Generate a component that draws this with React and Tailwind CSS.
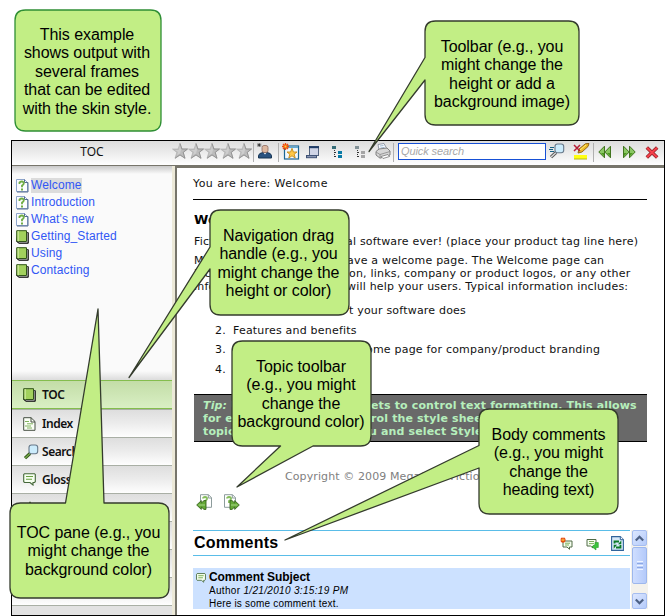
import React from "react";

const VERDANA = "font-['DejaVu_Sans',Verdana,sans-serif]";
const ARIAL = "font-['Liberation_Sans',Arial,sans-serif]";

function Star() {
  return (
    <svg width="16" height="16" viewBox="0 0 16 16" className="block shrink-0">
      <path d="M8 .5 9.9 6H15.5L11.2 9.4 13 15.3 8 11.9 3 15.3 4.8 9.4.5 6H6.1Z" fill="#bcbcbc" stroke="#b0b0b0" strokeWidth=".7" />
      <path d="M8 .5 9.9 6H15.5L11.2 9.4 13 15.3 8 11.9 3 15.3" fill="none" stroke="#8a8a8a" strokeWidth=".8" />
      <path d="M8 2.6 9 7 8 10.5 5 12 6 9 3 7H6.8Z" fill="#cdcdcd" />
    </svg>
  );
}

function Sep({ className = "" }) {
  return <div className={`h-[19px] w-px shrink-0 bg-[#b0b0b0] ${className}`} />;
}

function UserIcon() {
  return (
    <svg width="16" height="16" viewBox="0 0 16 16" className="block">
      <path d="M1.5 15V12.5Q2 10 6 9.5H10Q14 10 14.5 12.5V15Z" fill="#29527f" stroke="#173553" />
      <path d="M6.5 9.5 8 11.5 9.5 9.5Z" fill="#fff" />
      <rect x="5" y="2.5" width="6" height="7" rx="2" fill="#ddb8a0" stroke="#8c6a60" strokeWidth=".8" />
      <path d="M0 2H4.4M2.2 0V4M.8.6 3.7 3.5M3.7.6.8 3.5" stroke="#222" strokeWidth=".7" />
    </svg>
  );
}

function FavoriteWindowIcon() {
  return (
    <svg width="18" height="17" viewBox="0 0 18 17" className="block">
      <rect x="2.5" y="3" width="14" height="13" fill="#f2f8fc" stroke="#1c6594" strokeWidth="1.2" />
      <path d="M3 4.3H16" stroke="#62a9d0" strokeWidth="1.5" />
      <path d="M10 5.3 11.4 9H15L12.2 11.2 13.2 15 10 12.8 6.8 15 7.8 11.2 5 9H8.6Z" fill="#ffc847" stroke="#c58b18" strokeWidth=".9" />
      <path d="M3.5 0V7M0 3.5H7M1 1 6 6M6 1 1 6" stroke="#f04d0b" strokeWidth="1.4" />
      <rect x="2.5" y="2.5" width="2" height="2" fill="#ffd534" />
    </svg>
  );
}

function WindowIcon() {
  return (
    <svg width="14" height="13" viewBox="0 0 14 13" className="block">
      <rect x="3.5" y=".5" width="9" height="9" fill="#cfd4e6" stroke="#53627d" />
      <path d="M3 1.2H13" stroke="#1f3d67" strokeWidth="2" />
      <rect x=".5" y="9.5" width="10" height="2.2" fill="#8995b2" stroke="#3f5275" />
    </svg>
  );
}

function TreeIcon({ a, b }) {
  return (
    <svg width="11" height="12" viewBox="0 0 11 12" className="block" shapeRendering="crispEdges">
      <rect width="4" height="3" fill={a} />
      <path d="M2.5 4V11M3 6.5H5M3 10.5H5" stroke="#333" strokeDasharray="1 1" />
      <rect x="6" y="5" width="4" height="3" fill={b} />
      <rect x="6" y="9" width="4" height="3" fill={b} />
    </svg>
  );
}

function PrinterIcon() {
  return (
    <svg width="16" height="16" viewBox="0 0 16 16" className="block">
      <path d="M4 7 3 1.5 9 .5 12 6Z" fill="#f7faff" stroke="#7c8797" strokeWidth=".8" />
      <path d="M5 3 8.5 2.5M5.5 5 9.5 4.4" stroke="#89a8c4" strokeWidth=".8" />
      <path d="M1 8.5 4 6 12 5 15 8V12L5 15.2 1 12Z" fill="#d7d7d7" stroke="#777" strokeWidth=".9" />
      <path d="M1 9 5 11.5 15 8.5M5 11.5V15" fill="none" stroke="#888" strokeWidth=".8" />
      <path d="m6 13.5 7-2 1.5 2-6.5 2Z" fill="#fff" stroke="#666" strokeWidth=".7" />
    </svg>
  );
}

function Magnifier({ green }) {
  return (
    <svg width="16" height="16" viewBox="0 0 16 16" className="block">
      <path d="M7 9.5 2 14.2" stroke={green ? "#315719" : "#555"} strokeWidth="3.2" />
      <path d="M7 9.5 2.2 14" stroke={green ? "#78a94c" : "#ddd"} strokeWidth="1.3" />
      <rect x="6" y="1" width="8.7" height="8.7" rx="2.5" fill="#ccecfc" stroke="#68798a" strokeWidth="1.1" />
      {!green && <path d="M1 4.5H5M0 6.5H4M1 8.5H5" stroke="#176286" />}
    </svg>
  );
}

function HighlightIcon() {
  return (
    <svg width="17" height="17" viewBox="0 0 17 17" className="block">
      <path d="m5 10 1-4L12.5.7 16 .5 15 3.5 9 9Z" fill="#edba24" stroke="#8a5b0b" strokeWidth=".9" />
      <path d="M7 7 13 2" stroke="#ffed7b" />
      <path d="M1 2 7 8M7 2 1 8" stroke="#b51b35" strokeWidth="1.5" />
      <rect x="1" y="12" width="13" height="4" fill="#ffff12" />
      <path d="M1 16H14" stroke="#b6b61c" />
    </svg>
  );
}

function Arrows({ flip }) {
  return (
    <svg width="14" height="14" viewBox="0 0 14 14" className={flip ? "block -scale-x-100" : "block"}>
      <path d="M.8 7 6.5 1.2V12.8ZM6.8 7 12.5 1.2V12.8Z" fill="#8ac763" stroke="#41741f" strokeWidth="1" />
      <path d="M3 8H6V11ZM9 8H12V11Z" fill="#4d9a20" />
    </svg>
  );
}

function CloseIcon() {
  return (
    <svg width="14" height="13" viewBox="0 0 14 13" className="block">
      <path d="M1.8 1.5 12.2 11.5M12.2 1.5 1.8 11.5" stroke="#8f2026" strokeWidth="3.5" />
      <path d="M2 1.7 12 11.3M12 1.7 2 11.3" stroke="#f5414b" strokeWidth="2" />
    </svg>
  );
}

function PageIcon() {
  return (
    <svg width="13" height="15" viewBox="0 0 13 15" className="block">
      <path d="M.5 1.5H8.5L11.5 4.5V13.5H.5Z" fill="#fcfdff" stroke="#8ea5cc" />
      <path d="M8.5 1.5V4.5H12V14H1" fill="none" stroke="#556d91" />
      <path d="M3.5 6V4.5Q6 2.5 7.7 4.5Q8.2 6.5 6 7.5V9.2" fill="none" stroke="#6fac43" strokeWidth="1.8" />
      <rect x="5" y="10.5" width="2" height="2" fill="#6fac43" />
    </svg>
  );
}

function BookIcon() {
  return (
    <svg width="13" height="14" viewBox="0 0 13 14" className="block">
      <path d="M2 2.5H12V13H3L.5 11Z" fill="#fff" stroke="#444" />
      <path d="M.7.7H10.5V11.5H.7Z" fill="#a2d15d" stroke="#315419" />
      <path d="M2.2 1V11.4" stroke="#d6ecac" />
      <path d="M.5 11.4 3 13.3H12.3V2.5" fill="none" stroke="#222" />
    </svg>
  );
}

function IndexIcon() {
  return (
    <svg width="13" height="14" viewBox="0 0 13 14" className="block">
      <path d="M.7.7H8L12 4.5V13.3H.7Z" fill="#fbfff7" stroke="#464f43" />
      <path d="M8 .7V5H12" fill="none" stroke="#464f43" />
      <path d="M2 4.5H6M4 6.8H10M2 9H8M4 11H9" stroke="#80b25e" />
    </svg>
  );
}

function FavoritesIcon() {
  return (
    <svg width="14" height="14" viewBox="0 0 14 14" className="block">
      <path d="M7 .8 8.8 5H13L9.7 8 11 13 7 10.2 3 13 4.3 8 1 5H5.2Z" fill="#c8e6a4" stroke="#315419" />
    </svg>
  );
}

function Bubble({ width = 13 }) {
  return (
    <svg width={width} height={width} viewBox="0 0 13 13" className="block">
      <path d="M1.5.7H11.5L12.3 1.5V8.7L11.5 9.5H10V12L7 9.5H1.5L.7 8.7V1.5Z" fill="#f6fff0" stroke="#45683a" strokeWidth="1.1" />
      <path d="M3 3.5H10M3 6.2H9" stroke="#68a140" strokeWidth="1.1" />
    </svg>
  );
}

function TopicArrow({ flip }) {
  return (
    <svg width="17" height="16" viewBox="0 0 17 16" className="block">
      <g transform={flip ? "translate(-3 0)" : undefined}>
        <path d="M4.5.7H12.5L15.5 3.7V13.3H4.5Z" fill="#fff" stroke="#8d9c9c" />
        <path d="M12.3.7V4H15.5" fill="none" stroke="#8d9c9c" />
        <path d="M7 4.5Q7 3 9 3Q11.5 3.2 11 5Q10.8 6 9 7V9" fill="none" stroke="#85bd5c" strokeWidth="1.8" />
      </g>
      <g transform={flip ? "translate(17 0) scale(-1 1)" : undefined}>
        <path d="M.7 11 5.3 6.6V9L8 6.6H10V15.4H8L5.3 13V15.4Z" fill="#64aa36" stroke="#39651e" strokeWidth=".9" />
        <path d="M2.5 11H9" stroke="#a8d588" />
      </g>
    </svg>
  );
}

function TocRow({ icon, children, active }) {
  return (
    <div className="flex h-[17px] items-center">
      <div className="flex w-4 shrink-0 pl-px">{icon}</div>
      <span className={`h-[15px] leading-[15px] tracking-[0.12px] ${active ? "bg-[#dcdcdc]" : ""}`}>{children}</span>
    </div>
  );
}

function NavItem({ icon, children, active }) {
  return (
    <div
      className={`flex h-7 shrink-0 items-center border-t pl-[11px] font-['Noto_Sans',Tahoma,sans-serif] text-[12px] font-semibold tracking-[-0.45px] text-[#111] ${
        active
          ? "border-[#84bd4d] bg-linear-to-b from-[#c3dda7] to-[#d9efc4]"
          : "border-[#a9afa5] bg-linear-to-b from-[#dedede] via-[#ececec] to-[#fefefe]"
      }`}
    >
      <div className="w-[19px] shrink-0">{icon}</div>
      {children}
    </div>
  );
}

function Line({ lead, lw, children }) {
  return (
    <div className="flex h-[13px] whitespace-pre">
      <span className={`shrink-0 ${lw}`}>{lead}</span>
      <span>{children}</span>
    </div>
  );
}

function ScrollButton({ up }) {
  return (
    <div className="flex h-4 w-[15px] shrink-0 items-center justify-center rounded-[2px] border border-[#a5bdf0] bg-linear-to-br from-[#dce7ff] to-[#b5cbfa]">
      <svg width="9" height="7" viewBox="0 0 9 7">
        <path d={up ? "M.8 5.5 4.5 1.8 8.2 5.5" : "M.8 1.5 4.5 5.2 8.2 1.5"} fill="none" stroke="#4d6185" strokeWidth="2.2" />
      </svg>
    </div>
  );
}

function NavigationPane() {
  return (
    <aside className="flex w-[160px] shrink-0 flex-col bg-[#fafafa]">
      <div className="h-[8px] shrink-0 bg-linear-to-b from-[#c9c9c9] to-[#fafafa]" />
      <div className={`h-[197px] shrink-0 pl-[3px] pt-[3px] text-[12px] text-[#3157f5] ${ARIAL}`}>
        <TocRow icon={<PageIcon />} active>Welcome</TocRow>
        <TocRow icon={<PageIcon />}>Introduction</TocRow>
        <TocRow icon={<PageIcon />}>What's new</TocRow>
        <TocRow icon={<BookIcon />}>Getting_Started</TocRow>
        <TocRow icon={<BookIcon />}>Using</TocRow>
        <TocRow icon={<BookIcon />}>Contacting</TocRow>
      </div>
      <div className="h-[9px] shrink-0 bg-linear-to-b from-[#fafafa] to-[#dcdcdc]" />
      <NavItem icon={<BookIcon />} active>TOC</NavItem>
      <div className="h-px shrink-0 bg-[#84bd4d]" />
      <NavItem icon={<IndexIcon />}>Index</NavItem>
      <NavItem icon={<Magnifier green />}>Search</NavItem>
      <NavItem icon={<Bubble />}>Glossary</NavItem>
      <NavItem icon={<FavoritesIcon />}>Favorites</NavItem>
      <NavItem />
      <NavItem />
      <NavItem />
      <div className="grow border-t border-[#a9afa5] bg-[#e2e2e2]" />
    </aside>
  );
}

function Toolbar() {
  return (
    <div className="flex h-[24px] shrink-0 bg-linear-to-b from-[#dddddd] via-[#ececec] to-[#ffffff] pt-[2px]">
      <div className="w-[160px] shrink-0 text-center font-['Noto_Sans',Tahoma,sans-serif] text-[12px] leading-[18px] text-[#111]">TOC</div>
      <div className="flex">
        <Star /><Star /><Star /><Star /><Star />
      </div>
      <Sep className="ml-px" />
      <div className="ml-[3px] w-[21px]"><UserIcon /></div>
      <Sep />
      <div className="ml-[3px] w-[24px]"><FavoriteWindowIcon /></div>
      <div className="w-[26px] pt-[3px]"><WindowIcon /></div>
      <div className="w-[23px] pt-[3px]"><TreeIcon a="#356d78" b="#087ba6" /></div>
      <div className="w-[20px] pt-[3px]"><TreeIcon a="#819096" b="#a5a5a5" /></div>
      <div className="w-[18px]"><PrinterIcon /></div>
      <Sep />
      <div className={`ml-[4px] h-[17px] w-[148px] shrink-0 border border-[#1650d6] bg-white pl-[2px] text-[11px] italic leading-[15px] tracking-[-0.1px] text-[#a8a8a8] ${ARIAL}`}>Quick search</div>
      <div className="ml-[3px] w-[24px]"><Magnifier /></div>
      <div className="w-[20px]"><HighlightIcon /></div>
      <Sep />
      <div className="ml-[4px] w-[24px] pt-[2px]"><Arrows /></div>
      <div className="w-[23px] pt-[2px]"><Arrows flip /></div>
      <div className="pt-[3px]"><CloseIcon /></div>
    </div>
  );
}

function Comments() {
  return (
    <section className={`-ml-px mt-[20px] flex h-[79px] w-[455px] ${ARIAL}`}>
      <div className="w-[437px] shrink-0">
        <div className="flex h-[26px] items-center border-y border-[#5abde8]">
          <h2 className="grow pl-px text-[16px] font-bold leading-[24px] text-black">Comments</h2>
          <div className="flex w-[26px]">
            <svg width="13" height="13" viewBox="0 0 13 13">
              <path d="M3 4H12V10H9.5V12.3L7 10H3Z" fill="#f6fff0" stroke="#506b47" />
              <path d="M5 6.2H10M5 8H9" stroke="#7caf5d" />
              <path d="M3 .5V6M.3 3H6M1 1 5 5M5 1 1 5" stroke="#e65012" strokeWidth="1.2" />
              <rect x="2.2" y="2.2" width="1.6" height="1.6" fill="#ffd534" />
            </svg>
          </div>
          <div className="w-[25px] pt-[3px]">
            <svg width="13" height="13" viewBox="0 0 13 13">
              <path d="M1 1.5H10V8H7V10L4.5 8H1Z" fill="#f6fff0" stroke="#506b47" />
              <path d="M3 3.5H8M3 5.6H8" stroke="#7caf5d" />
              <path d="M9 4.5H12.3V9.5H10V12L6 8.7 9 6.5Z" fill="#3cc43d" stroke="#289828" strokeWidth=".6" />
            </svg>
          </div>
          <div className="w-[19px] pt-px">
            <svg width="13" height="15" viewBox="0 0 13 15">
              <path d="M.6.6H9.3L12.4 3.7V14.4H.6Z" fill="#d6e8f8" stroke="#31639a" strokeWidth="1.1" />
              <path d="M9.3.6V3.7H12.4" fill="#fff" stroke="#31639a" />
              <path d="M3.5 7.5V5.5H8M9.5 9V11.5H5" fill="none" stroke="#0d7a28" strokeWidth="1.8" />
              <path d="M7 8.3H10.3V4.5ZM6 8.8H2.7V12.8Z" fill="#0d7a28" />
            </svg>
          </div>
        </div>
        <div className="mt-[12px] flex h-[41px] bg-[#cce1ff] pl-[3px] pt-px text-black">
          <div className="w-[13px] shrink-0 pt-[4px]"><Bubble width={10} /></div>
          <div>
            <div className="h-[15px] text-[12px] font-bold leading-[16px] tracking-[-0.07px]">Comment Subject</div>
            <div className="h-[13px] whitespace-nowrap text-[10px] leading-[14px] tracking-[0.32px]">Author <i>1/21/2010 3:15:19 PM</i></div>
            <div className="h-[12px] whitespace-nowrap text-[10px] leading-[14px] tracking-[0.2px]">Here is some comment text.</div>
          </div>
        </div>
      </div>
      <div className="ml-px flex w-[17px] flex-col items-center bg-[#f4f2ec] px-px">
        <ScrollButton up />
        <div className="my-px flex h-[37px] w-[15px] shrink-0 flex-col items-center justify-center gap-px rounded-[2px] border border-[#9db7ed] bg-linear-to-r from-[#cfdeff] to-[#b4cafa]">
          <span className="h-px w-[6px] bg-[#eef4ff]" />
          <span className="h-px w-[6px] bg-[#8ca8e4]" />
          <span className="h-px w-[6px] bg-[#eef4ff]" />
          <span className="h-px w-[6px] bg-[#8ca8e4]" />
          <span className="h-px w-[6px] bg-[#eef4ff]" />
        </div>
        <div className="grow" />
        <ScrollButton />
      </div>
    </section>
  );
}

function TopicPane() {
  return (
    <main className={`grow overflow-hidden border-l-2 border-t-2 border-[#77756b] bg-white pl-[17px] text-[11px] leading-[13px] tracking-[0.2px] text-[#111] ${VERDANA}`}>
      <div className="-ml-px mt-[9px] h-[22px] tracking-[0.42px]">You are here: Welcome</div>
      <div className="-ml-px h-px w-[454px] bg-black" />
      <h1 className="mt-[12px] h-[23px] text-[13px] font-bold leading-[15px] text-black">Welcome</h1>
      <Line lead="Fictionsoft, the fiction" lw="w-[152px]">al software ever! (place your product tag line here)</Line>
      <div className="mt-[6px]">
        <Line lead="Most help systems h" lw="w-[153px]">ave a welcome page. The Welcome page can</Line>
        <Line lead="include informati" lw="w-[155px]">on, links, company or product logos, or any other</Line>
        <Line lead="information that " lw="w-[153px]">will help your users. Typical information includes:</Line>
      </div>
      <ol className="mt-[11px] h-[90px] pl-[21px]">
        <li className="h-[20px]"><Line lead="1.  Overview of wha" lw="w-[134px]">t your software does</Line></li>
        <li className="h-[19px]"><Line lead="2." lw="w-[18px]">Features and benefits</Line></li>
        <li className="h-[20px]"><Line lead="3.  Custom welc" lw="w-[151px]">ome page for company/product branding</Line></li>
        <li><Line lead="4." lw="w-[18px]">Contacts</Line></li>
      </ol>
      <div className="h-[48px] w-[453px] border-y border-black bg-[#696969] pl-[9px] pt-[4px] font-bold tracking-[0.14px] text-[#b6efbc]">
        <Line lead={<><i>Tip:</i> Use style she</>} lw="w-[168px]">ets to control text formatting. This allows</Line>
        <Line lead="for easy use. Cont" lw="w-[168px]">rol the style sheet for each</Line>
        <Line lead="topic. Open the men" lw="w-[166px]">u and select Styles.</Line>
      </div>
      <div className="mt-[28px] h-[24px] whitespace-nowrap pl-[91px] tracking-[0.1px] text-[#808080]">Copyright © 2009 MegaCorp Fictionsoft</div>
      <div className="flex h-[16px] gap-[10px] pl-[2px]">
        <TopicArrow />
        <TopicArrow flip />
      </div>
      <Comments />
    </main>
  );
}

function Callout({ path, box, lines, stroke = "#343b2d" }) {
  return (
    <>
      <svg width="665" height="616" viewBox="0 0 665 616" className="pointer-events-none absolute left-0 top-0">
        <path d={path} fill="#c2ee85" stroke={stroke} strokeWidth="1.3" strokeLinejoin="round" />
      </svg>
      <div className={`absolute text-center text-[16px] leading-[18.4px] tracking-[-0.06px] text-black ${ARIAL} ${box}`}>
        {lines.map((text) => (
          <div key={text} className="whitespace-nowrap">{text}</div>
        ))}
      </div>
    </>
  );
}

export default function App() {
  return (
    <div className="relative h-[616px] w-[665px] overflow-hidden bg-white pl-[11px] pt-[140px]">
      <div className="flex h-[476px] w-[654px] flex-col border border-black bg-white">
        <Toolbar />
        <div className="h-px shrink-0 bg-[#77756b]" />
        <div className="flex min-h-0 grow">
          <NavigationPane />
          <div className="w-[3px] shrink-0 bg-[#ece9d8]" />
          <TopicPane />
        </div>
      </div>

      <Callout
        stroke="#2f8f35"
        path="M25.5 10H150.5Q161 10 161 20.5V120.5Q161 131 150.5 131H25.5Q15 131 15 120.5V20.5Q15 10 25.5 10Z"
        box="left-[14px] top-[26px] w-[146px]"
        lines={["This example", "shows output with", "several frames", "that can be edited", "with the skin style."]}
      />
      <Callout
        path="M435.5 21H568.5Q579 21 579 31.5V114.5Q579 125 568.5 125H435.5Q425 125 425 114.5V80L369 151.5 425 57.5V31.5Q425 21 435.5 21Z"
        box="left-[425px] top-[38px] w-[154px]"
        lines={["Toolbar (e.g., you", "might change the", "height or add a", "background image)"]}
      />
      <Callout
        path="M220.5 210H338.5Q349 210 349 220.5V304.5Q349 315 338.5 315H220.5Q210 315 210 304.5V269L129 377.5 210 247V220.5Q210 210 220.5 210Z"
        box="left-[209px] top-[227px] w-[139px]"
        lines={["Navigation drag", "handle (e.g., you", "might change the", "height or color)"]}
      />
      <Callout
        path="M242.5 341H360.5Q371 341 371 351.5V435.5Q371 446 360.5 446H313L237 487 280.5 446H242.5Q232 446 232 435.5V351.5Q232 341 242.5 341Z"
        box="left-[231px] top-[358px] w-[140px]"
        lines={["Topic toolbar", "(e.g., you might", "change the", "background color)"]}
      />
      <Callout
        path="M489.5 409H607.5Q618 409 618 419.5V503.5Q618 514 607.5 514H489.5Q479 514 479 503.5V468L285 540 479 445.5V419.5Q479 409 489.5 409Z"
        box="left-[479px] top-[426px] w-[139px]"
        lines={["Body comments", "(e.g., you might", "change the", "heading text)"]}
      />
      <Callout
        path="M20.5 503H65.5L98 309 104 503H158.5Q169 503 169 513.5V587.5Q169 598 158.5 598H20.5Q10 598 10 587.5V513.5Q10 503 20.5 503Z"
        box="left-[9px] top-[524px] w-[159px]"
        lines={["TOC pane (e.g., you", "might change the", "background color)"]}
      />
    </div>
  );
}
